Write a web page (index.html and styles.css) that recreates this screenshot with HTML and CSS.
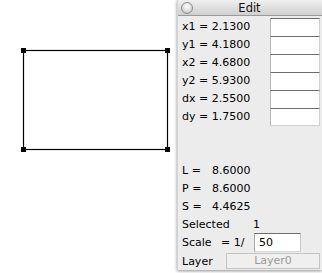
FILE: index.html
```html
<html>
  <head>
    <title>Edit</title>
    <link rel="stylesheet" href="styles.css">
  </head>
  <body>
    <div class="canvas">
      <svg width="177" height="273" viewBox="0 0 177 273">
        <rect x="23.5" y="50.5" width="144" height="99" fill="none" stroke="#000" stroke-width="1.2"/>
        <rect x="21" y="48" width="5" height="5" fill="#000"/>
        <rect x="165" y="48" width="5" height="5" fill="#000"/>
        <rect x="21" y="147" width="5" height="5" fill="#000"/>
        <rect x="165" y="147" width="5" height="5" fill="#000"/>
      </svg>
    </div>
    <div class="panel">
      <div class="titlebar">
        <span class="closebtn"></span>
        <span class="title">Edit</span>
      </div>
      <div class="coords">
        <div class="lbl">x1 = 2.1300</div><div class="fld"></div>
        <div class="lbl">y1 = 4.1800</div><div class="fld"></div>
        <div class="lbl">x2 = 4.6800</div><div class="fld"></div>
        <div class="lbl">y2 = 5.9300</div><div class="fld"></div>
        <div class="lbl">dx = 2.5500</div><div class="fld"></div>
        <div class="lbl">dy = 1.7500</div><div class="fld last"></div>
      </div>
      <div class="info">
        <div class="row"><span class="key">L =</span><span>8.6000</span></div>
        <div class="row"><span class="key">P =</span><span>8.6000</span></div>
        <div class="row"><span class="key">S =</span><span>4.4625</span></div>
        <div class="row"><span class="key wide">Selected</span><span>1</span></div>
        <div class="row scale"><span class="key">Scale</span><span class="ratio">= 1/</span><span class="scalebox">50</span></div>
        <div class="row"><span class="key">Layer</span><span class="layerbtn">Layer0</span></div>
      </div>
    </div>
  </body>
</html>
```

FILE: styles.css
```css
body {
  margin: 0;
  background: #fff;
  display: flex;
  font-family: "DejaVu Sans", "Liberation Sans", sans-serif;
  font-size: 11px;
  color: #000;
  overflow: hidden;
}
.canvas {
  width: 177px;
  height: 273px;
}
.canvas svg {
  display: block;
}
.panel {
  width: 144px;
  height: 270px;
  background: #ececec;
  border-left: 1px solid #d4d4d4;
  box-shadow: 0 1px 3px rgba(0, 0, 0, 0.45);
  display: flex;
  flex-direction: column;
}
.titlebar {
  height: 16px;
  background: linear-gradient(#efefef, #d0d0d0);
  border-bottom: 1px solid #9a9a9a;
  display: flex;
  align-items: center;
  box-sizing: border-box;
}
.closebtn {
  width: 10px;
  height: 10px;
  margin-left: 3px;
  border-radius: 50%;
  border: 1px solid #8c8c8c;
  background: radial-gradient(circle at 50% 35%, #ffffff, #d8d8d8 60%, #b8b8b8);
}
.title {
  flex: 1;
  text-align: center;
  padding-right: 16px;
  font-size: 11.5px;
  color: #111;
}
.coords {
  margin-top: 2px;
  display: grid;
  grid-template-columns: 1fr 50px;
  grid-auto-rows: 18px;
  padding-right: 2px;
}
.lbl {
  line-height: 18px;
  padding-left: 4px;
}
.fld {
  background: #fff;
  border-top: 1px solid #6e6e6e;
  border-left: 1px solid #b8b8b8;
  border-right: 1px solid #d0d0d0;
}
.fld.last {
  border-bottom: 1px solid #d0d0d0;
}
.info {
  margin-top: 35px;
  padding-left: 4px;
}
.row {
  height: 18px;
  display: flex;
  align-items: center;
}
.key {
  width: 30px;
  flex-shrink: 0;
}
.key.wide {
  width: 71px;
}
.scale {
  height: 19px;
}
.ratio {
  width: 42px;
  padding-left: 9px;
  box-sizing: border-box;
  flex-shrink: 0;
  white-space: nowrap;
}
.scalebox {
  width: 47px;
  height: 19px;
  box-sizing: border-box;
  background: #fff;
  border-top: 1px solid #6e6e6e;
  border-left: 1px solid #a8a8a8;
  border-right: 1px solid #c8c8c8;
  border-bottom: 1px solid #d8d8d8;
  padding-left: 4px;
  line-height: 17px;
}
.layerbtn {
  margin-left: 14px;
  width: 94px;
  height: 16px;
  box-sizing: border-box;
  border: 1px solid #c4c4c4;
  background: #efefef;
  color: #999;
  text-align: center;
  line-height: 14px;
}
```
